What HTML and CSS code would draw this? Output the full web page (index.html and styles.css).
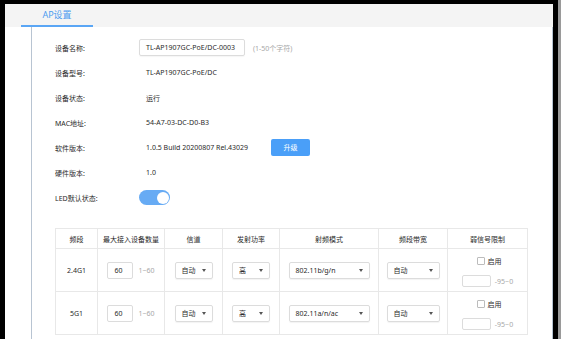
FILE: index.html
```html
<html>
<head>
    <meta charset="utf-8">
    <title>AP设置</title>
    <link rel="stylesheet" href="styles.css">
</head>
<body>
<div class="screen">
    <div class="window">
        <div class="tabs">
            <div class="tab">AP设置</div>
        </div>
        <div class="content">
            <div class="panel">
                <div class="row">
                    <span class="label">设备名称:</span>
                    <span class="text-input name-input">TL-AP1907GC-PoE/DC-0003</span>
                    <span class="hint">(1-50个字符)</span>
                </div>
                <div class="row">
                    <span class="label">设备型号:</span>
                    <span class="value">TL-AP1907GC-PoE/DC</span>
                </div>
                <div class="row">
                    <span class="label">设备状态:</span>
                    <span class="value">运行</span>
                </div>
                <div class="row">
                    <span class="label">MAC地址:</span>
                    <span class="value">54-A7-03-DC-D0-B3</span>
                </div>
                <div class="row">
                    <span class="label">软件版本:</span>
                    <span class="value version">1.0.5 Build 20200807 Rel.43029</span>
                    <span class="btn">升级</span>
                </div>
                <div class="row">
                    <span class="label">硬件版本:</span>
                    <span class="value">1.0</span>
                </div>
                <div class="row">
                    <span class="label">LED默认状态:</span>
                    <span class="toggle"><span class="knob"></span></span>
                </div>

                <table class="radio-table">
                    <colgroup>
                        <col style="width:42px">
                        <col style="width:67px">
                        <col style="width:58px">
                        <col style="width:57px">
                        <col style="width:99px">
                        <col style="width:69px">
                        <col style="width:80px">
                    </colgroup>
                    <tr class="head">
                        <th>频段</th>
                        <th>最大接入设备数量</th>
                        <th>信道</th>
                        <th>发射功率</th>
                        <th>射频模式</th>
                        <th>频段带宽</th>
                        <th>弱信号限制</th>
                    </tr>
                    <tr>
                        <td>2.4G1</td>
                        <td><span class="num-input">60</span><span class="range">1~60</span></td>
                        <td><span class="select sel-s"><span>自动</span><i class="arrow"></i></span></td>
                        <td><span class="select sel-s"><span>高</span><i class="arrow"></i></span></td>
                        <td><span class="select sel-l"><span>802.11b/g/n</span><i class="arrow"></i></span></td>
                        <td><span class="select sel-m"><span>自动</span><i class="arrow"></i></span></td>
                        <td>
                            <div class="weak">
                                <div class="check-line"><span class="checkbox"></span>启用</div>
                                <div class="rssi-line"><span class="rssi-input"></span><span class="range">-95~0</span></div>
                            </div>
                        </td>
                    </tr>
                    <tr>
                        <td>5G1</td>
                        <td><span class="num-input">60</span><span class="range">1~60</span></td>
                        <td><span class="select sel-s"><span>自动</span><i class="arrow"></i></span></td>
                        <td><span class="select sel-s"><span>高</span><i class="arrow"></i></span></td>
                        <td><span class="select sel-l"><span>802.11a/n/ac</span><i class="arrow"></i></span></td>
                        <td><span class="select sel-m"><span>自动</span><i class="arrow"></i></span></td>
                        <td>
                            <div class="weak">
                                <div class="check-line"><span class="checkbox"></span>启用</div>
                                <div class="rssi-line"><span class="rssi-input"></span><span class="range">-95~0</span></div>
                            </div>
                        </td>
                    </tr>
                </table>
            </div>
        </div>
    </div>
    <div class="edge"></div>
</div>
</body>
</html>
```
FILE: styles.css
```css
* {
    font-family: "Noto Sans", "Noto Sans CJK SC", sans-serif;
    box-sizing: border-box;
}

body {
    margin: 0;
    background-color: #000000;
}

.screen {
    display: flex;
    width: 561px;
    height: 339px;
    overflow: hidden;
    background-color: #000000;
}

.window {
    width: 548px;
    margin: 4px 0 0 5px;
    display: flex;
    flex-direction: column;
    background-color: #ffffff;
}

.edge {
    width: 3px;
    margin-left: 5px;
    background-color: #9a9a9a;
}

.tabs {
    height: 23px;
    background-color: #f4f4f4;
    display: flex;
}

.tab {
    margin-left: 16px;
    width: 72px;
    height: 23px;
    border-bottom: 2px solid #5aa6f5;
    color: #4d9cf0;
    font-size: 9px;
    text-align: center;
    line-height: 21px;
}

.content {
    flex: 1;
    border-right: 1px solid #b5c3d1;
}

.panel {
    height: 100%;
    margin-left: 26px;
    padding: 8px 0 0 23px;
    border-left: 1px solid #b8c4d2;
    font-size: 7px;
    color: #2a2a2a;
}

.row {
    display: flex;
    align-items: center;
    height: 25px;
}

.label {
    width: 84px;
}

.value {
    padding-left: 7px;
}

.version {
    width: 132px;
}

.text-input {
    border: 1px solid #dcdcdc;
    border-radius: 2px;
    box-shadow: 0 1px 1px rgba(0, 0, 0, 0.04);
}

.name-input {
    width: 106px;
    height: 17px;
    padding-left: 6px;
    line-height: 15px;
}

.hint {
    margin-left: 8px;
    color: #a8a8a8;
}

.btn {
    width: 39px;
    height: 17px;
    border-radius: 2px;
    background-color: #4a9ff8;
    color: #ffffff;
    text-align: center;
    line-height: 17px;
}

.toggle {
    width: 31px;
    height: 15px;
    border-radius: 8px;
    background-color: #67abf4;
    display: flex;
    justify-content: flex-end;
    align-items: center;
    padding-right: 1.5px;
}

.knob {
    width: 12px;
    height: 12px;
    border-radius: 50%;
    background-color: #ffffff;
}

.radio-table {
    margin-top: 18px;
    width: 472px;
    table-layout: fixed;
    border-collapse: collapse;
    border: 1px solid #e3e3e3;
}

.radio-table th,
.radio-table td {
    border: 1px solid #e8e8e8;
    text-align: center;
    font-weight: normal;
    padding: 0;
    font-size: 7px;
    color: #2a2a2a;
}

.radio-table th {
    height: 20px;
}

.radio-table td {
    height: 43px;
}

.num-input {
    display: inline-block;
    width: 26px;
    height: 17px;
    border: 1px solid #dcdcdc;
    border-radius: 2px;
    line-height: 15px;
    text-align: left;
    padding-left: 6px;
    vertical-align: middle;
}

.range {
    margin-left: 5px;
    color: #a8a8a8;
    vertical-align: middle;
}

.select {
    display: inline-flex;
    align-items: center;
    justify-content: space-between;
    height: 17px;
    padding: 0 6px;
    border: 1px solid #dcdcdc;
    border-radius: 2px;
    box-shadow: 0 1px 1px rgba(0, 0, 0, 0.05);
    vertical-align: middle;
}

.sel-s {
    width: 38px;
}

.sel-m {
    width: 53px;
}

.sel-l {
    width: 81px;
}

.arrow {
    width: 0;
    height: 0;
    border-left: 2.5px solid transparent;
    border-right: 2.5px solid transparent;
    border-top: 3px solid #555555;
}

.weak {
    display: flex;
    flex-direction: column;
    align-items: center;
    padding-top: 3px;
}

.check-line {
    display: flex;
    align-items: center;
    margin-left: 3px;
    height: 10px;
}

.checkbox {
    width: 8px;
    height: 8px;
    border: 1px solid #bcbcbc;
    border-radius: 1px;
    margin-right: 3px;
}

.rssi-line {
    display: flex;
    align-items: center;
    margin-top: 9px;
}

.rssi-input {
    width: 29px;
    height: 12px;
    border: 1px solid #dcdcdc;
    border-radius: 2px;
}

.rssi-line .range {
    margin-left: 4px;
}
```
